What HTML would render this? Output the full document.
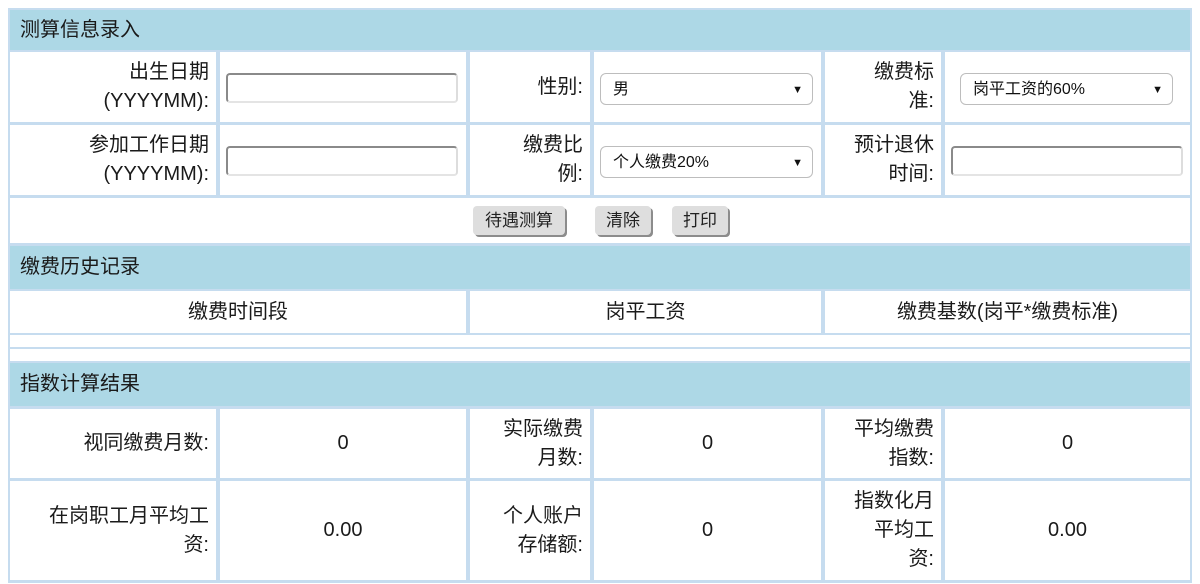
<!DOCTYPE html>
<html><head><meta charset="utf-8"><style>
html,body{margin:0;padding:0;background:#fff;width:1200px;height:584px;overflow:hidden;}
#t{position:absolute;left:8px;top:8px;width:1184px;height:575px;background:#c6dcef;}
.c{position:absolute;background:#fff;font-family:"Liberation Sans","Noto Sans CJK SC",sans-serif;font-size:20px;color:#1a1a1a;line-height:29px;box-sizing:border-box;}
.h{background:#add8e6;padding-left:10px;display:flex;align-items:center;}
.l{display:flex;align-items:center;justify-content:flex-end;text-align:right;padding-right:7px;}
.m{display:flex;align-items:center;justify-content:center;text-align:center;}
.inp{position:absolute;background:#fff;border:2px solid #aaa;border-top-color:#8a8a8a;border-left-color:#8a8a8a;border-bottom-color:#e4e4e4;border-right-color:#ddd;border-radius:4px;box-sizing:border-box;}
.sel{position:absolute;background:#fff;border:1px solid #bdbdbd;border-radius:6px;box-sizing:border-box;font-family:"Liberation Sans","Noto Sans CJK SC",sans-serif;font-size:16px;color:#111;padding-left:12px;line-height:32px;}
.sel:after{content:"▼";position:absolute;right:9px;top:0;font-size:11px;}
.btn{position:absolute;background:#dedede;border-radius:4px;box-shadow:2px 2px 0 #8c8c8c;font-family:"Liberation Sans","Noto Sans CJK SC",sans-serif;font-size:17px;color:#222;text-align:center;line-height:29px;height:29px;}
</style></head><body>
<div id="t"></div>
<div class="c h" style="left:10px;top:10px;width:1180px;height:40px">测算信息录入</div>

<div class="c l" style="left:10px;top:52px;width:206px;height:70px">出生日期<br>(YYYYMM):</div>
<div class="c" style="left:220px;top:52px;width:246px;height:70px"></div>
<div class="c l" style="left:470px;top:52px;width:120px;height:70px">性别:</div>
<div class="c" style="left:594px;top:52px;width:227px;height:70px"></div>
<div class="c l" style="left:825px;top:52px;width:116px;height:70px">缴费标<br>准:</div>
<div class="c" style="left:945px;top:52px;width:245px;height:70px"></div>

<div class="c l" style="left:10px;top:125px;width:206px;height:70px">参加工作日期<br>(YYYYMM):</div>
<div class="c" style="left:220px;top:125px;width:246px;height:70px"></div>
<div class="c l" style="left:470px;top:125px;width:120px;height:70px">缴费比<br>例:</div>
<div class="c" style="left:594px;top:125px;width:227px;height:70px"></div>
<div class="c l" style="left:825px;top:125px;width:116px;height:70px">预计退休<br>时间:</div>
<div class="c" style="left:945px;top:125px;width:245px;height:70px"></div>

<div class="inp" style="left:226px;top:73px;width:232px;height:30px"></div>
<div class="inp" style="left:226px;top:146px;width:232px;height:30px"></div>
<div class="inp" style="left:951px;top:146px;width:232px;height:30px"></div>
<div class="sel" style="left:600px;top:73px;width:213px;height:32px">男</div>
<div class="sel" style="left:960px;top:73px;width:213px;height:32px">岗平工资的60%</div>
<div class="sel" style="left:600px;top:146px;width:213px;height:32px">个人缴费20%</div>

<div class="c" style="left:10px;top:198px;width:1180px;height:45px"></div>
<div class="btn" style="left:473px;top:206px;width:92px">待遇测算</div>
<div class="btn" style="left:595px;top:206px;width:56px">清除</div>
<div class="btn" style="left:672px;top:206px;width:56px">打印</div>

<div class="c h" style="left:10px;top:246px;width:1180px;height:43px">缴费历史记录</div>
<div class="c m" style="left:10px;top:291px;width:456px;height:42px">缴费时间段</div>
<div class="c m" style="left:470px;top:291px;width:351px;height:42px">岗平工资</div>
<div class="c m" style="left:825px;top:291px;width:365px;height:42px">缴费基数(岗平*缴费标准)</div>
<div class="c" style="left:10px;top:335px;width:1180px;height:12px"></div>
<div class="c" style="left:10px;top:349px;width:1180px;height:12px"></div>

<div class="c h" style="left:10px;top:363px;width:1180px;height:43px">指数计算结果</div>
<div class="c l" style="left:10px;top:409px;width:206px;height:69px">视同缴费月数:</div>
<div class="c m" style="left:220px;top:409px;width:246px;height:69px">0</div>
<div class="c l" style="left:470px;top:409px;width:120px;height:69px">实际缴费<br>月数:</div>
<div class="c m" style="left:594px;top:409px;width:227px;height:69px">0</div>
<div class="c l" style="left:825px;top:409px;width:116px;height:69px">平均缴费<br>指数:</div>
<div class="c m" style="left:945px;top:409px;width:245px;height:69px">0</div>

<div class="c l" style="left:10px;top:481px;width:206px;height:99px">在岗职工月平均工<br>资:</div>
<div class="c m" style="left:220px;top:481px;width:246px;height:99px">0.00</div>
<div class="c l" style="left:470px;top:481px;width:120px;height:99px">个人账户<br>存储额:</div>
<div class="c m" style="left:594px;top:481px;width:227px;height:99px">0</div>
<div class="c l" style="left:825px;top:481px;width:116px;height:99px">指数化月<br>平均工<br>资:</div>
<div class="c m" style="left:945px;top:481px;width:245px;height:99px">0.00</div>
</body></html>
